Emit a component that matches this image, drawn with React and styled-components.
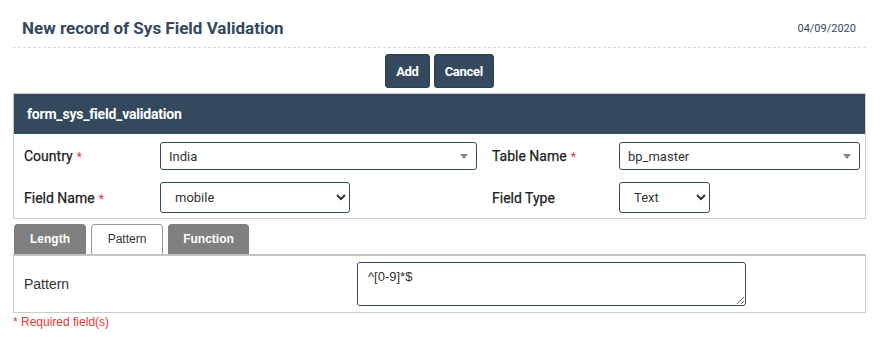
import React from "react";
import styled, { createGlobalStyle } from "styled-components";

const GlobalStyle = createGlobalStyle`
  body {
    margin: 0;
    background: #fff;
    font-family: Roboto, "Liberation Sans", Arial, sans-serif;
    color: #333;
  }
`;

const Page = styled.div`
  width: 853px;
  padding: 0 15px 0 13px;
`;

const Header = styled.div`
  display: flex;
  justify-content: space-between;
  align-items: center;
  height: 48px;
  padding: 8px 10px 0 9px;
  box-sizing: border-box;
  border-bottom: 1px dashed #dcdcdc;
`;

const Title = styled.h1`
  margin: 0;
  font-size: 17px;
  font-weight: 700;
  color: #34495e;
`;

const DateText = styled.span`
  font-size: 11px;
  color: #34495e;
  margin-top: 2px;
`;

const Actions = styled.div`
  display: flex;
  justify-content: center;
  gap: 4px;
  padding: 6px 0 5px;
`;

const Button = styled.button`
  height: 34px;
  padding: 0 10px;
  border: 1px solid #2c3e50;
  border-radius: 3px;
  background: #34495e;
  color: #fff;
  font-family: Roboto, sans-serif;
  font-size: 13px;
  font-weight: 700;
  letter-spacing: -0.3px;
`;

const PanelHead = styled.div`
  height: 41px;
  display: flex;
  align-items: center;
  padding: 0 13px;
  background: #34495e;
  border: 1px solid #ccc;
  border-bottom: none;
  box-sizing: border-box;
  color: #fff;
  font-size: 14px;
  font-weight: 700;
  letter-spacing: -0.2px;
`;

const FormBody = styled.div`
  display: grid;
  grid-template-columns: 136px 317px 142px 241px;
  row-gap: 12px;
  height: 85px;
  padding: 8px 5px 0 10px;
  border: 1px solid #ccc;
  border-top: none;
  box-sizing: border-box;
  align-content: start;
  align-items: center;
`;

const Label = styled.label`
  font-size: 14px;
  font-weight: 400;
  color: #222;
  padding-left: ${(p) => (p.$right ? "15px" : "0")};
  -webkit-text-stroke: 0.25px #222;
`;

const Star = styled.span`
  color: #e53935;
  font-size: 12px;
  margin-left: 4px;
  -webkit-text-stroke: 0;
`;

const ComboBox = styled.div`
  height: 28px;
  box-sizing: border-box;
  border: 1px solid #34495e;
  border-radius: 3px;
  display: flex;
  align-items: center;
  justify-content: space-between;
  padding: 0 8px;
  font-size: 13px;
  color: #333;
`;

const Caret = styled.span`
  width: 0;
  height: 0;
  border-left: 4px solid transparent;
  border-right: 4px solid transparent;
  border-top: 5px solid #888;
`;

const SelectCell = styled.div`
  display: flex;
  height: 31px;
`;

const Select = styled.select`
  width: ${(p) => p.$w}px;
  height: 31px;
  border: 1px solid #34495e;
  border-radius: 3px;
  background: #fff;
  padding: 0 8px 0 10px;
  font-family: Roboto, sans-serif;
  font-size: 13px;
  color: #333;
`;

const Tabs = styled.div`
  display: flex;
  height: 30px;
  gap: 5px;
  margin-top: 5px;
  padding-left: 1px;
`;

const Tab = styled.div`
  width: ${(p) => p.$w}px;
  height: 30px;
  box-sizing: border-box;
  display: flex;
  align-items: center;
  justify-content: center;
  padding-bottom: 2px;
  border-radius: 4px 4px 0 0;
  font-family: "Liberation Sans", Arial, sans-serif;
  font-size: 12px;
  line-height: 1;
  font-weight: ${(p) => (p.$active ? 400 : 700)};
  background: ${(p) => (p.$active ? "#fff" : "#808080")};
  color: ${(p) => (p.$active ? "#333" : "#fff")};
  border: 1px solid ${(p) => (p.$active ? "#999" : "#808080")};
  border-bottom: none;
`;

const TabPanel = styled.div`
  display: flex;
  align-items: center;
  height: 59px;
  box-sizing: border-box;
  padding: 0 10px;
  border: 1px solid #ccc;
  border-top: 2px solid #c4c4c4;
`;

const PanelLabel = styled.div`
  width: 333px;
  font-family: "Liberation Sans", Arial, sans-serif;
  font-size: 14px;
  color: #333;
`;

const TextArea = styled.textarea`
  display: block;
  width: 389px;
  height: 44px;
  box-sizing: border-box;
  border: 1px solid #34495e;
  border-radius: 3px;
  padding: 6px 10px;
  font-family: "Liberation Sans", Arial, sans-serif;
  font-size: 13px;
  color: #333;
  resize: vertical;
`;

const Required = styled.div`
  margin-top: 2px;
  font-family: "Liberation Sans", Arial, sans-serif;
  font-size: 12px;
  color: #e53935;
`;

export default function App() {
  return (
    <Page>
      <GlobalStyle />
      <Header>
        <Title>New record of Sys Field Validation</Title>
        <DateText>04/09/2020</DateText>
      </Header>
      <Actions>
        <Button>Add</Button>
        <Button>Cancel</Button>
      </Actions>
      <PanelHead>form_sys_field_validation</PanelHead>
      <FormBody>
        <Label>
          Country<Star>*</Star>
        </Label>
        <ComboBox>
          India
          <Caret />
        </ComboBox>
        <Label $right>
          Table Name<Star>*</Star>
        </Label>
        <ComboBox>
          bp_master
          <Caret />
        </ComboBox>
        <Label>
          Field Name<Star>*</Star>
        </Label>
        <SelectCell>
          <Select $w={190} defaultValue="mobile">
            <option value="mobile">mobile</option>
          </Select>
        </SelectCell>
        <Label $right>Field Type</Label>
        <SelectCell>
          <Select $w={91} defaultValue="Text">
            <option value="Text">Text</option>
          </Select>
        </SelectCell>
      </FormBody>
      <Tabs>
        <Tab $w={72}>Length</Tab>
        <Tab $w={72} $active>
          Pattern
        </Tab>
        <Tab $w={81}>Function</Tab>
      </Tabs>
      <TabPanel>
        <PanelLabel>Pattern</PanelLabel>
        <TextArea defaultValue="^[0-9]*$" />
      </TabPanel>
      <Required>* Required field(s)</Required>
    </Page>
  );
}
